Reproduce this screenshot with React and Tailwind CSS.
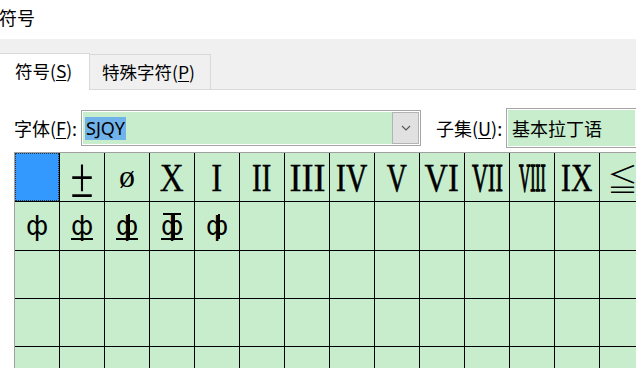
import React from 'react'

const cjk = "font-['Noto_Sans_CJK_SC','Noto_Sans',sans-serif]"

// small glyph with extra strokes, used for the rebar symbols in row 2
const Rebar = ({ under, over, twin }) => (
  <div className="relative w-[22px] h-[28px] flex items-center justify-center">
    <span className="font-['DejaVu_Sans',sans-serif] text-[26px] leading-[28px] text-black">ф</span>
    {twin && <span className="absolute left-[12px] top-[2px] bottom-[1px] w-[1.5px] bg-black" />}
    {under && <span className="absolute left-0 right-0 bottom-0 h-[2px] bg-black" />}
    {over && <span className="absolute left-[2px] right-[2px] top-[1px] h-[2px] bg-black" />}
  </div>
)

// roman numerals: tall, narrow serif glyphs
const Roman = ({ text, squeeze }) => (
  <span className={`font-['Liberation_Serif',serif] text-[41px] leading-none text-black inline-block ${squeeze}`}>
    {text}
  </span>
)

const row1 = [
  { sel: true },
  { node: <span className="font-['Liberation_Serif',serif] text-[40px] leading-none pt-[2px] scale-x-[1.05] scale-y-[1.42] inline-block">±</span> },
  { node: <span className="font-['Liberation_Serif',serif] text-[32px] leading-none pb-[2px]">ø</span> },
  { node: <Roman text="X" squeeze="scale-x-[0.81] [-webkit-text-stroke:0.3px_black]" /> },
  { node: <Roman text="I" squeeze="scale-x-[0.8] [-webkit-text-stroke:0.3px_black]" /> },
  { node: <Roman text="II" squeeze="scale-x-[0.7] [-webkit-text-stroke:0.6px_black]" /> },
  { node: <Roman text="III" squeeze="scale-x-[0.88] [-webkit-text-stroke:0.3px_black]" /> },
  { node: <Roman text="IV" squeeze="scale-x-[0.72] [-webkit-text-stroke:0.6px_black]" /> },
  { node: <Roman text="V" squeeze="scale-x-[0.68] [-webkit-text-stroke:0.6px_black]" /> },
  { node: <Roman text="VI" squeeze="scale-x-[0.79] [-webkit-text-stroke:0.4px_black]" /> },
  { node: <Roman text="VII" squeeze="scale-x-[0.54] [-webkit-text-stroke:1px_black]" /> },
  { node: <Roman text="VIII" squeeze="scale-x-[0.38] [-webkit-text-stroke:1.5px_black]" /> },
  { node: <Roman text="IX" squeeze="scale-x-[0.72] [-webkit-text-stroke:0.6px_black]" /> },
  { node: <span className="w-full pl-[7px] font-['Noto_Sans_CJK_SC',sans-serif] text-[31px] leading-none font-light">≦</span> },
]

const row2 = [
  <Rebar />,
  <Rebar under />,
  <Rebar under twin />,
  <Rebar under over twin />,
  <Rebar twin />,
]

const heights = ['h-[49px]', 'h-[49px]', 'h-[48px]', 'h-[48px]', 'h-[48px]']

const App = () => {
  return (
    <div className={`w-[636px] h-[368px] overflow-hidden bg-white text-black ${cjk}`}>
      {/* title */}
      <div className="h-[39px] pt-[4px] -ml-[1px] text-[18px] leading-[26px]">符号</div>

      {/* tabs */}
      <div className="h-[51px] bg-[#f0f0f0] flex items-end">
        <div className="w-[90px] h-[37px] bg-white border-t border-r border-[#d9d9d9] pl-[15px] text-[17.5px] leading-[34px]">
          符号(<span className="underline underline-offset-2">S</span>)
        </div>
        <div className="w-[121px] h-[36px] border-t border-r border-b border-[#d9d9d9] pl-[12px] text-[17.5px] leading-[33px]">
          特殊字符(<span className="underline underline-offset-2">P</span>)
        </div>
        <div className="flex-1 h-px bg-[#d9d9d9]" />
      </div>

      {/* font / subset row */}
      <div className="flex items-center pt-[18px] h-[58px]">
        <div className="pl-[14px] w-[81px] text-[18px] leading-[24px]">
          字体(<span className="underline underline-offset-2">F</span>):
        </div>
        <div className="w-[340px] h-[36px] border border-[#a5a5a5] p-px bg-white flex">
          <div className="flex-1 bg-[#c7edcc] flex items-center pl-[2px]">
            <span className="bg-[#70b2ea] text-[18px] leading-[23px] px-px font-['Noto_Sans',sans-serif]">SJQY</span>
          </div>
          <div className="w-[27px] bg-[#e1e1e1] border border-[#b4b4b4] flex items-center justify-center">
            <svg width="10" height="6" viewBox="0 0 10 6" fill="none" stroke="#555" strokeWidth="1.1">
              <polyline points="1,1 5,5 9,1" />
            </svg>
          </div>
        </div>
        <div className="pl-[15px] w-[85px] shrink-0 text-[18px] leading-[24px] whitespace-nowrap">
          子集(<span className="underline underline-offset-2">U</span>):
        </div>
        <div className="flex-1 h-[40px] border border-[#a5a5a5] border-r-0 p-px bg-white">
          <div className="h-full bg-[#c7edcc] pl-[4px] text-[18px] leading-[36px]">基本拉丁语</div>
        </div>
      </div>

      {/* symbol grid */}
      <div className="mt-[4px] ml-[14px] w-max border-l border-t border-[#a0a0a0]">
        {heights.map((h, r) => (
          <div key={r} className="flex">
            {Array.from({ length: 14 }).map((_, c) => {
              let content = null
              let sel = false
              if (r === 0) {
                sel = !!row1[c].sel
                content = row1[c].node
              } else if (r === 1 && c < row2.length) {
                content = row2[c]
              }
              return (
                <div
                  key={c}
                  className={`w-[45px] ${h} shrink-0 border-r border-b border-black bg-[#c7edcc] flex items-center justify-center overflow-hidden`}
                >
                  {sel ? (
                    <div className="w-full h-full bg-[#3399ff] border border-dotted border-[#333]" />
                  ) : (
                    content
                  )}
                </div>
              )
            })}
          </div>
        ))}
      </div>
    </div>
  )
}

export default App
